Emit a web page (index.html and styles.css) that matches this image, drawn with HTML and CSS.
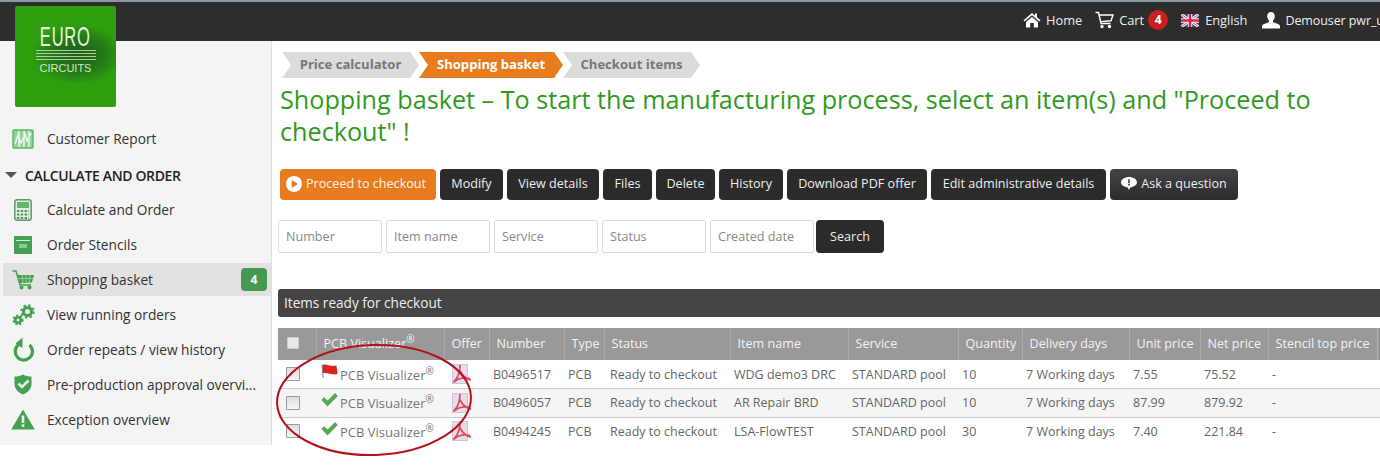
FILE: index.html
```html
<!DOCTYPE html>
<html lang="en">

<head>
    <meta charset="UTF-8">
    <title>Shopping basket</title>
    <link rel="stylesheet" href="styles.css">
</head>

<body>
    <div class="topbar">
        <div class="topnav">
            <a class="toplink">
                <svg width="18" height="16" viewBox="0 0 18 16"><path fill="#fff" d="M9 1 0.5 8.2 1.6 9.4 9 3.3 16.4 9.4 17.5 8.2 14 5.2V1.5H12V3.5ZM3 10 9 5 15 10V15.5H10.8V11H7.2V15.5H3Z"/></svg>
                Home
            </a>
            <a class="toplink">
                <svg width="19" height="18" viewBox="0 0 19 18"><path fill="none" stroke="#fff" stroke-width="1.4" d="M0.5 1.5H3.5L6 12.5H15.5M4.2 4H18L16 9.8 5.4 10.6"/><circle fill="#fff" cx="7" cy="15.5" r="1.7"/><circle fill="#fff" cx="14.5" cy="15.5" r="1.7"/></svg>
                Cart <span class="cartcount">4</span>
            </a>
            <a class="toplink toplink-lang">
                <svg width="18" height="13" viewBox="0 0 18 13">
                    <rect width="18" height="13" fill="#39407f"/>
                    <path stroke="#eee" stroke-width="3" d="M0 0 18 13M18 0 0 13"/>
                    <path stroke="#d5526b" stroke-width="1" d="M0 0 18 13M18 0 0 13"/>
                    <path stroke="#eee" stroke-width="4.5" d="M9 0V13M0 6.5H18"/>
                    <path stroke="#d5284f" stroke-width="2.5" d="M9 0V13M0 6.5H18"/>
                </svg>
                English
            </a>
            <a class="toplink toplink-user">
                <svg width="18" height="17" viewBox="0 0 18 17"><path fill="#fff" d="M9 0C6.6 0 5.2 1.8 5.2 4.2 5.2 6 6 7.6 7 8.6V10L1 12.6C0.4 12.9 0 13.5 0 14.2V16.5H18V14.2C18 13.5 17.6 12.9 17 12.6L11 10V8.6C12 7.6 12.8 6 12.8 4.2 12.8 1.8 11.4 0 9 0Z"/></svg>
                Demouser pwr_u
            </a>
        </div>
    </div>

    <div class="logo">
        <span class="logo-euro">EURO</span>
        <span class="logo-lines"></span>
        <span class="logo-circuits">CIRCUITS</span>
    </div>

    <div class="content">
        <div class="sidebar">
            <a class="navitem">
                <span class="navicon"><svg width="22" height="20" viewBox="0 0 22 20"><rect x="1" y="1" width="20" height="18" rx="1" fill="#8ed596" stroke="#5cb868" stroke-width="1.5"/><path fill="none" stroke="#f4f4f4" stroke-width="1.4" d="M3 15 6 6 9 14 13 5 15 12 19 4M7 2V18M12 2V18M17 2V18"/></svg></span>
                Customer Report
            </a>
            <div class="navhead"><span class="navcaret"></span>CALCULATE AND ORDER</div>
            <a class="navitem">
                <span class="navicon"><svg width="18" height="22" viewBox="0 0 18 22"><rect x="0.8" y="0.8" width="16.4" height="20.4" rx="2.5" fill="#dfeee0" stroke="#5e9e64" stroke-width="1.5"/><rect x="3" y="3" width="12" height="6" fill="#67b56f"/><path stroke="#4e9a57" stroke-width="2" stroke-dasharray="2.4 1.4" d="M3 12H15M3 15.5H15M3 19H15"/></svg></span>
                Calculate and Order
            </a>
            <a class="navitem">
                <span class="navicon"><svg width="18" height="18" viewBox="0 0 18 18"><rect width="18" height="18" rx="1" fill="#45a052"/><rect x="2" y="4" width="14" height="1" fill="#d8eeda"/><rect x="5" y="8" width="8" height="4" fill="#8bcb92"/></svg></span>
                Order Stencils
            </a>
            <a class="navitem navitem-active">
                <span class="navicon"><svg width="23" height="20" viewBox="0 0 23 20"><path fill="none" stroke="#45a052" stroke-width="1.5" d="M0.5 1H4L8 15H19"/><path fill="#45a052" d="M5.5 5H22L20 12.5 7.5 13.2Z"/><path fill="none" stroke="#a8d5ad" stroke-width="0.8" d="M10 5 11 13M14 5V13M18 5 17 13M6 8.5H21"/><circle fill="#45a052" cx="9.5" cy="17.5" r="2"/><circle fill="#45a052" cx="17.5" cy="17.5" r="2"/></svg></span>
                Shopping basket
                <span class="navbadge">4</span>
            </a>
            <a class="navitem">
                <span class="navicon"><svg width="23" height="22" viewBox="0 0 23 22"><g fill="none" stroke="#45a052"><circle cx="15.5" cy="7.5" r="4" stroke-width="3"/><circle cx="15.5" cy="7.5" r="6.2" stroke-width="2" stroke-dasharray="2.4 2.47"/><circle cx="6" cy="16" r="2.8" stroke-width="2.6"/><circle cx="6" cy="16" r="4.6" stroke-width="1.8" stroke-dasharray="2 1.85"/></g></svg></span>
                View running orders
            </a>
            <a class="navitem">
                <span class="navicon"><svg width="22" height="25" viewBox="0 0 22 25"><path fill="none" stroke="#45a052" stroke-width="3.2" d="M6.4 7.8A8.6 8.6 0 1 0 17.5 8"/><path fill="#45a052" d="M10.5 0.5V11L3.5 6.5Z"/></svg></span>
                Order repeats / view history
            </a>
            <a class="navitem">
                <span class="navicon"><svg width="18" height="21" viewBox="0 0 18 21"><path fill="#45a052" d="M9 0.5C11.5 2 14.5 2.6 17.5 2.6V10C17.5 15 13.5 18.6 9 20.5 4.5 18.6 0.5 15 0.5 10V2.6C3.5 2.6 6.5 2 9 0.5Z"/><path fill="none" stroke="#dff2e0" stroke-width="2.6" d="M4.5 9.5 8 13 14.5 6.5"/></svg></span>
                Pre-production approval overvi...
            </a>
            <a class="navitem">
                <span class="navicon"><svg width="24" height="21" viewBox="0 0 24 21"><path fill="#45a052" d="M12 0.5 23.8 20.5H0.2Z"/><rect x="10.7" y="6.5" width="2.6" height="7.5" fill="#f2f2f2"/><rect x="10.7" y="15.3" width="2.6" height="2.6" fill="#f2f2f2"/></svg></span>
                Exception overview
            </a>
        </div>

        <div class="main">
            <div class="steps">
                <span class="step">Price calculator</span>
                <span class="step step-active">Shopping basket</span>
                <span class="step">Checkout items</span>
            </div>

            <h1 class="pagetitle">Shopping basket – To start the manufacturing process, select an item(s) and "Proceed to checkout" !</h1>

            <div class="actions">
                <button class="btn btn-orange">
                    <svg width="16" height="16" viewBox="0 0 16 16"><circle cx="8" cy="8" r="8" fill="#fff"/><path fill="#e87b1e" d="M5.8 4 12 8 5.8 12Z"/></svg>
                    Proceed to checkout
                </button>
                <button class="btn btn-modify">Modify</button>
                <button class="btn btn-view">View details</button>
                <button class="btn btn-files">Files</button>
                <button class="btn btn-delete">Delete</button>
                <button class="btn btn-history">History</button>
                <button class="btn btn-pdf">Download PDF offer</button>
                <button class="btn btn-edit">Edit administrative details</button>
                <button class="btn btn-ask">
                    <svg width="16" height="13" viewBox="0 0 16 13"><path fill="#fff" d="M8 0C12.4 0 16 2.3 16 5.2 16 8 12.6 10 9.5 10.3L8 13 6.5 10.3C3.4 10 0 8 0 5.2 0 2.3 3.6 0 8 0Z"/><rect x="7.2" y="2.4" width="1.6" height="3.8" fill="#333"/><rect x="7.2" y="7" width="1.6" height="1.5" fill="#333"/></svg>
                    Ask a question
                </button>
            </div>

            <div class="searchrow">
                <input class="searchinput" placeholder="Number">
                <input class="searchinput" placeholder="Item name">
                <input class="searchinput" placeholder="Service">
                <input class="searchinput" placeholder="Status">
                <input class="searchinput" placeholder="Created date">
                <button class="btn btn-search">Search</button>
            </div>

            <div class="panelhead">Items ready for checkout</div>

            <table class="items">
                <colgroup>
                    <col class="c-check"><col class="c-vis"><col class="c-offer"><col class="c-num"><col class="c-type"><col class="c-status"><col class="c-name"><col class="c-service"><col class="c-qty"><col class="c-days"><col class="c-unit"><col class="c-net"><col class="c-sten"><col class="c-rest">
                </colgroup>
                <thead>
                    <tr>
                        <th><span class="check check-head"></span></th>
                        <th>PCB Visualizer<sup>®</sup></th>
                        <th>Offer</th>
                        <th>Number</th>
                        <th>Type</th>
                        <th>Status</th>
                        <th>Item name</th>
                        <th>Service</th>
                        <th>Quantity</th>
                        <th>Delivery days</th>
                        <th>Unit price</th>
                        <th>Net price</th>
                        <th>Stencil top price</th>
                        <th></th>
                    </tr>
                </thead>
                <tbody>
                    <tr>
                        <td><span class="check"></span></td>
                        <td class="viscell"><svg class="flag" width="17" height="15" viewBox="0 0 17 15"><path fill="#d8231f" d="M1.5 1C5 -0.5 8 3 15.5 1.5L16.5 10C10 11.5 6 8 2 9.5Z"/><path stroke="#777" stroke-width="1" d="M1 1 2.2 14"/></svg>PCB Visualizer<sup>®</sup></td>
                        <td class="pdfcell"><svg width="20" height="20" viewBox="0 0 20 20"><rect x="0.5" y="0.5" width="15" height="19" fill="#e6dcec" stroke="#cfc4da"/><path fill="none" stroke="#df4a55" stroke-width="1.8" d="M8 1C8 9 5 15 1.5 18.5M8 7C10 11 14 15 19 16M2.5 17.5C7 14 12 13 18 14.5"/></svg></td>
                        <td>B0496517</td>
                        <td>PCB</td>
                        <td class="statuscell">Ready to checkout</td>
                        <td>WDG demo3 DRC</td>
                        <td>STANDARD pool</td>
                        <td>10</td>
                        <td>7 Working days</td>
                        <td>7.55</td>
                        <td>75.52</td>
                        <td>-</td>
                        <td></td>
                    </tr>
                    <tr class="row-alt">
                        <td><span class="check"></span></td>
                        <td class="viscell"><svg class="flag" width="17" height="14" viewBox="0 0 17 14"><path fill="#55a94f" d="M0.5 7 3 4 6.5 7.5 14 0 16.8 3 6.5 13.5Z"/></svg>PCB Visualizer<sup>®</sup></td>
                        <td class="pdfcell"><svg width="20" height="20" viewBox="0 0 20 20"><rect x="0.5" y="0.5" width="15" height="19" fill="#e6dcec" stroke="#cfc4da"/><path fill="none" stroke="#df4a55" stroke-width="1.8" d="M8 1C8 9 5 15 1.5 18.5M8 7C10 11 14 15 19 16M2.5 17.5C7 14 12 13 18 14.5"/></svg></td>
                        <td>B0496057</td>
                        <td>PCB</td>
                        <td class="statuscell">Ready to checkout</td>
                        <td>AR Repair BRD</td>
                        <td>STANDARD pool</td>
                        <td>10</td>
                        <td>7 Working days</td>
                        <td>87.99</td>
                        <td>879.92</td>
                        <td>-</td>
                        <td></td>
                    </tr>
                    <tr>
                        <td><span class="check"></span></td>
                        <td class="viscell"><svg class="flag" width="17" height="14" viewBox="0 0 17 14"><path fill="#55a94f" d="M0.5 7 3 4 6.5 7.5 14 0 16.8 3 6.5 13.5Z"/></svg>PCB Visualizer<sup>®</sup></td>
                        <td class="pdfcell"><svg width="20" height="20" viewBox="0 0 20 20"><rect x="0.5" y="0.5" width="15" height="19" fill="#e6dcec" stroke="#cfc4da"/><path fill="none" stroke="#df4a55" stroke-width="1.8" d="M8 1C8 9 5 15 1.5 18.5M8 7C10 11 14 15 19 16M2.5 17.5C7 14 12 13 18 14.5"/></svg></td>
                        <td>B0494245</td>
                        <td>PCB</td>
                        <td class="statuscell">Ready to checkout</td>
                        <td>LSA-FlowTEST</td>
                        <td>STANDARD pool</td>
                        <td>30</td>
                        <td>7 Working days</td>
                        <td>7.40</td>
                        <td>221.84</td>
                        <td>-</td>
                        <td></td>
                    </tr>
                </tbody>
            </table>
        </div>
    </div>

    <!-- hand drawn ring over the first table columns -->
    <svg class="ring" width="210" height="125" viewBox="0 0 210 125"><ellipse cx="104" cy="62" rx="97" ry="55" transform="rotate(-2 104 62)" fill="none" stroke="#b0141a" stroke-width="2"/></svg>
</body>

</html>
```

FILE: styles.css
```css
* {
    padding: 0;
    margin: 0;
    box-sizing: border-box;
}

html,
body {
    height: 467px;
    overflow: hidden;
    background: #fff;
}

body {
    position: relative;
    font-family: "Open Sans", "Liberation Sans", sans-serif;
    font-size: 13px;
    color: #333;
}

/* top bar */
.topbar {
    height: 41px;
    background: #2d2d2d;
    border-top: 2px solid #8d97a3;
    display: flex;
    justify-content: flex-end;
    align-items: center;
}

.topnav {
    width: 357px;
    display: flex;
    align-items: center;
    white-space: nowrap;
    padding-bottom: 3px;
}

.toplink {
    display: flex;
    align-items: center;
    gap: 5px;
    color: #eee;
    font-size: 12.8px;
    margin-right: 13px;
    flex-shrink: 0;
}

.toplink-lang {
    gap: 6px;
    margin-right: 15px;
}

.toplink-user {
    margin-right: 0;
    font-size: 12.5px;
    letter-spacing: -0.1px;
}

.cartcount {
    width: 20px;
    height: 20px;
    margin-left: -1px;
    border-radius: 50%;
    background: #c8201f;
    color: #fff;
    font-size: 12px;
    font-weight: 700;
    text-align: center;
    line-height: 20px;
}

/* logo hangs over the top bar */
.logo {
    position: absolute;
    left: 15px;
    top: 6px;
    width: 101px;
    height: 101px;
    border-radius: 2px;
    background: radial-gradient(ellipse 46px 30px at 62% 48%, #1c5f12 0, #24761a 55%, transparent 100%), #2f9e0e;
    color: #e4f3dc;
    font-family: "Liberation Sans", sans-serif;
    display: flex;
    flex-direction: column;
    align-items: center;
}

.logo-euro {
    font-size: 23px;
    line-height: 23px;
    letter-spacing: 1px;
    margin-top: 19px;
    transform: scale(0.72, 1.2);
}

.logo-lines {
    width: 60px;
    height: 12px;
    margin-top: 2px;
    background: repeating-linear-gradient(#cfe3c4 0, #cfe3c4 1px, transparent 1px, transparent 3px);
    opacity: 0.8;
}

.logo-circuits {
    font-size: 11px;
    line-height: 12px;
    color: #cfe6c8;
}

/* sidebar */
.content {
    display: flex;
    height: 404px;
}

.sidebar {
    width: 272px;
    flex-shrink: 0;
    background: #f4f4f4;
    border-right: 1px solid #ddd;
    padding: 80px 0 0 3px;
    overflow: hidden;
}

.navitem,
.navhead {
    display: flex;
    align-items: center;
    height: 35px;
    white-space: nowrap;
    font-size: 13.7px;
    color: #333;
}

.navhead {
    height: 36px;
    padding: 2px 0 0 2px;
    font-size: 14px;
    font-weight: 600;
    color: #222;
    letter-spacing: -0.35px;
}

.navcaret {
    width: 0;
    height: 0;
    border-left: 6px solid transparent;
    border-right: 6px solid transparent;
    border-top: 6px solid #555;
    margin-right: 8px;
}

.navicon {
    width: 44px;
    height: 33px;
    display: flex;
    align-items: center;
    justify-content: center;
    flex-shrink: 0;
    padding-right: 4px;
}

.navitem-active {
    height: 33px;
    margin: 1px 0;
    background: #e2e2e2;
}

.navbadge {
    margin-left: auto;
    margin-right: 4px;
    width: 26px;
    height: 23px;
    border-radius: 4px;
    background: #459a4f;
    color: #fff;
    font-size: 12px;
    font-weight: 700;
    line-height: 23px;
    text-align: center;
}

/* main column */
.main {
    flex: 1;
    min-width: 0;
    padding: 11px 0 0 6px;
    overflow: hidden;
}

.steps {
    display: flex;
    padding-left: 4px;
    height: 26px;
}

.step {
    width: 137px;
    height: 26px;
    background: #dcdcdc;
    color: #777;
    font-size: 13.1px;
    font-weight: 700;
    line-height: 24px;
    text-align: center;
    clip-path: polygon(0 0, calc(100% - 9px) 0, 100% 50%, calc(100% - 9px) 100%, 0 100%, 9px 50%);
}

.step-active {
    width: 144px;
    background: #e87b1e;
    color: #fff;
}

.pagetitle {
    font-size: 25.2px;
    font-weight: 400;
    line-height: 32px;
    color: #2f9a1e;
    margin: 5px 30px 0 2px;
}

.actions {
    display: flex;
    gap: 4px;
    margin: 22px 0 0 2px;
}

.btn {
    height: 31px;
    padding-bottom: 2px;
    border: 0;
    border-radius: 4px;
    background: #2b2b2b;
    color: #eee;
    font-family: inherit;
    font-size: 12.6px;
    display: flex;
    align-items: center;
    justify-content: center;
    gap: 4px;
    flex-shrink: 0;
}

.btn-orange {
    width: 156px;
    justify-content: flex-start;
    padding-left: 6px;
    background: #e87b1e;
    color: #fff5e8;
}

.btn-modify { width: 63px; }
.btn-view { width: 92px; }
.btn-files { width: 49px; }
.btn-delete { width: 59px; }
.btn-history { width: 64px; }
.btn-pdf { width: 140px; }
.btn-edit { width: 175px; }

.btn-ask {
    width: 128px;
    background: linear-gradient(#444, #2b2b2b);
}

.searchrow {
    display: flex;
    gap: 4px;
    margin-top: 20px;
}

.searchinput {
    width: 104px;
    height: 33px;
    border: 1px solid #ddd;
    border-radius: 2px;
    padding: 0 0 0 7px;
    font-family: inherit;
    font-size: 12.6px;
    background: #fff;
    color: #555;
}

.searchinput::placeholder {
    color: #888;
    opacity: 1;
}

.btn-search {
    width: 68px;
    height: 33px;
    padding-bottom: 0;
    margin-left: -2px;
}

.panelhead {
    height: 28px;
    margin-top: 36px;
    width: 1110px;
    padding-left: 6px;
    border-radius: 3px 0 0 3px;
    background: #444;
    color: #eee;
    font-size: 13.6px;
    line-height: 27px;
}

/* table */
.items {
    margin-top: 11px;
    width: 1110px;
    table-layout: fixed;
    border-collapse: collapse;
    white-space: nowrap;
}

.c-check { width: 38px; }
.c-vis { width: 128px; }
.c-offer { width: 45px; }
.c-num { width: 75px; }
.c-type { width: 40px; }
.c-status { width: 126px; }
.c-name { width: 118px; }
.c-service { width: 110px; }
.c-qty { width: 64px; }
.c-days { width: 107px; }
.c-unit { width: 71px; }
.c-net { width: 68px; }
.c-sten { width: 109px; }
.c-rest { width: 11px; }

.items th {
    height: 32px;
    padding: 0 0 2px 7px;
    background: #999;
    border-left: 1px solid #aaa;
    color: #f2f2f2;
    font-size: 12.6px;
    font-weight: 400;
    text-align: left;
}

.items th:first-child {
    border-left: 0;
    padding-left: 9px;
}

.items td {
    height: 28.5px;
    padding: 0 0 0 4px;
    border-bottom: 1px solid #ccc;
    color: #666;
    font-size: 12.5px;
    overflow: hidden;
}

.items td:first-child {
    padding-left: 8px;
}

.items .statuscell {
    padding-left: 6px;
}

.items sup {
    font-size: 10px;
    line-height: 0;
}

.row-alt td {
    background: #f5f5f5;
    border-top: 1px solid #ccc;
}

.items .viscell {
    padding-left: 5px;
    font-size: 13px;
    color: #777;
}

.flag {
    vertical-align: 1px;
    margin-right: 2px;
}

.pdfcell svg {
    display: block;
    margin-left: 4px;
}

.check {
    display: block;
    width: 14px;
    height: 14px;
    background: linear-gradient(#ddd, #f8f8f8);
    border: 1px solid #999;
    border-radius: 1px;
}

.check-head {
    width: 12px;
    height: 12px;
    background: #e8e8e8;
    border-color: #ccc;
}

/* ring sits on top of the page */
.ring {
    position: absolute;
    left: 270px;
    top: 338px;
    pointer-events: none;
}
```
